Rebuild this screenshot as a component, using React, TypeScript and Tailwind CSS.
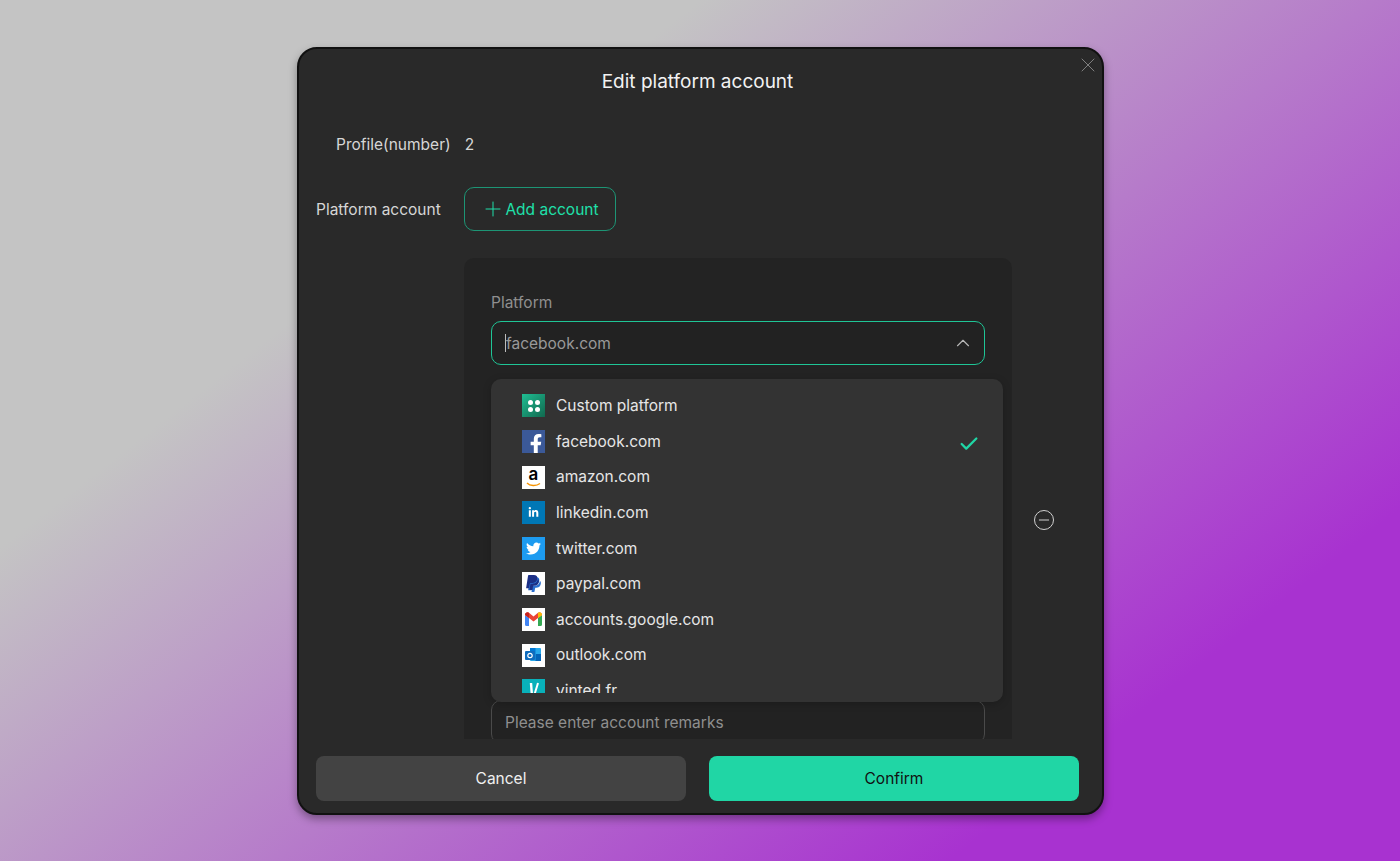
import { ReactNode } from "react";
import { FaFacebookF, FaLinkedinIn, FaPaypal, FaTwitter } from "react-icons/fa";
import { LuCheck, LuChevronUp, LuMinus, LuPlus, LuX } from "react-icons/lu";

const platforms: { name: string; icon: ReactNode; selected?: boolean }[] = [
  {
    name: "Custom platform",
    icon: (
      <div className="flex h-[23px] w-[23px] items-center justify-center bg-gradient-to-br from-[#1fbf94] to-[#11694f]">
        <div className="grid grid-cols-2 gap-[2px]">
          <span className="h-[5px] w-[5px] rounded-full bg-white" />
          <span className="h-[5px] w-[5px] rounded-full bg-white" />
          <span className="h-[5px] w-[5px] rounded-full bg-white" />
          <span className="h-[5px] w-[5px] rounded-full bg-white" />
        </div>
      </div>
    ),
  },
  {
    name: "facebook.com",
    selected: true,
    icon: (
      <div className="flex h-[23px] w-[23px] items-end justify-center overflow-hidden bg-[#3b5998] pl-[5px]">
        <FaFacebookF className="h-[20px] w-[20px] shrink-0 translate-y-[1px] text-white" />
      </div>
    ),
  },
  {
    name: "amazon.com",
    icon: (
      <div className="flex h-[23px] w-[23px] flex-col items-center bg-white">
        <span className="h-[16px] text-[17px] font-semibold leading-[16px] text-black">a</span>
        <svg width="15" height="5" viewBox="0 0 15 5" fill="none">
          <path d="M1 1C4 4 10 4.500 14 1.500" stroke="#f79400" strokeWidth="1.400" />
        </svg>
      </div>
    ),
  },
  {
    name: "linkedin.com",
    icon: (
      <div className="flex h-[23px] w-[23px] items-center justify-center bg-[#0077b5]">
        <FaLinkedinIn className="h-[11px] w-[11px] text-white" />
      </div>
    ),
  },
  {
    name: "twitter.com",
    icon: (
      <div className="flex h-[23px] w-[23px] items-center justify-center bg-[#1d9bf0]">
        <FaTwitter className="h-[15px] w-[15px] text-white" />
      </div>
    ),
  },
  {
    name: "paypal.com",
    icon: (
      <div className="relative flex h-[23px] w-[23px] items-center justify-center bg-white">
        <FaPaypal className="h-[17px] w-[17px] translate-x-[1px] translate-y-[1px] text-[#2a6fd0]" />
        <FaPaypal className="absolute left-[2px] top-[2px] h-[17px] w-[17px] text-[#1c2f86]" />
      </div>
    ),
  },
  {
    name: "accounts.google.com",
    icon: (
      <div className="flex h-[23px] w-[23px] items-center justify-center bg-white">
        <svg width="17" height="14" viewBox="0 0 17 14" fill="none">
          <path d="M0 3v9.500A1.500 1.500 0 0 0 1.500 14H4V6z" fill="#4285f4" />
          <path d="M13 6v8h2.500a1.500 1.500 0 0 0 1.500-1.500V3z" fill="#34a853" />
          <path d="M0 3c0-2.500 2.600-3.500 4-2.200L8.500 4.500 13 .8C14.400-.5 17 .5 17 3l-4 3-4.500 3.400L4 6z" fill="#ea4335" />
          <path d="M13 .8 13 6l4-3c0-2.500-2.600-3.500-4-2.200z" fill="#fbbc04" />
          <path d="M0 3c0-2.500 2.600-3.500 4-2.200V6z" fill="#c5221f" />
        </svg>
      </div>
    ),
  },
  {
    name: "outlook.com",
    icon: (
      <div className="flex h-[23px] w-[23px] items-center justify-center bg-white">
        <svg width="17" height="16" viewBox="0 0 17 16" fill="none">
          <rect x="5" y="1" width="11" height="13" rx="1" fill="#28a8ea" />
          <rect x="5" y="1" width="5.500" height="6" fill="#0078d4" />
          <rect x="10.500" y="7" width="5.500" height="7" fill="#0364b8" />
          <rect x="0" y="4" width="10" height="9" rx="1" fill="#0f6cbd" />
          <circle cx="5" cy="8.500" r="2.200" stroke="white" strokeWidth="1.200" />
        </svg>
      </div>
    ),
  },
  {
    name: "vinted.fr",
    icon: (
      <div className="flex h-[23px] w-[23px] items-center justify-center bg-[#09b1ba]">
        <svg width="12" height="17" viewBox="0 0 12 17" fill="none">
          <path d="M3 1 4 14" stroke="white" strokeWidth="2.400" />
          <path d="M10 1 6 14" stroke="white" strokeWidth="2" />
        </svg>
      </div>
    ),
  },
];

export default function App() {
  return (
    <div className="flex h-[861px] items-center justify-center overflow-hidden bg-[linear-gradient(142deg,#c4c4c4_28%,#a832d0_82%)] font-['Inter','Liberation_Sans',sans-serif]">
      <div className="relative ml-[1px] flex h-[768px] w-[807px] flex-col rounded-[20px] border-2 border-[#111111] bg-[#292929] shadow-[0_4px_8px_rgba(0,0,0,0.35)]">
        <button type="button" className="absolute right-[2px] top-[4px] text-[#808080]">
          <LuX className="h-[24px] w-[24px]" strokeWidth={1} />
        </button>

        <h2 className="pr-[6px] pt-[19px] text-center text-[19px] font-normal leading-[28px] text-[#f2f2f2]">
          Edit platform account
        </h2>

        <div className="mt-[15px] flex h-[628px] flex-col overflow-hidden pl-[17px] pt-[10px]">
          <div className="flex h-[44px] shrink-0 items-center pl-[20px] pt-[4px] text-[15.5px] text-[#d6d6d6]">
            <span>Profile(number)</span>
            <span className="ml-[14px]">2</span>
          </div>

          <div className="mt-[22px] flex shrink-0 items-center">
            <span className="w-[148px] pt-[2px] text-[15.5px] text-[#d6d6d6]">Platform account</span>
            <button
              type="button"
              className="flex h-[44px] w-[152px] items-center justify-center rounded-[10px] border border-[#1d9575] text-[15.5px] text-[#1fe0aa]"
            >
              <LuPlus className="h-[24px] w-[24px]" strokeWidth={1} />
              <span className="pt-[2px]">Add account</span>
            </button>
          </div>

          <div className="mt-[27px] flex shrink-0">
            <div className="relative ml-[148px] h-[600px] w-[548px] shrink-0 rounded-[10px] bg-[#232323] px-[27px] pt-[34px]">
              <div className="text-[15.5px] leading-[22px] text-[#8f8f8f]">Platform</div>
              <div className="mt-[7px] flex h-[44px] w-[494px] items-center justify-between rounded-[10px] border border-[#1fc596] bg-[#222222] pl-[13px] pr-[10px]">
                <div className="flex items-center">
                  <span className="h-[18px] w-px bg-[#bdbdbd]" />
                  <span className="pt-[2px] text-[15.5px] text-[#999999]">facebook.com</span>
                </div>
                <LuChevronUp className="h-[22px] w-[22px] text-[#b8b8b8]" strokeWidth={1.25} />
              </div>

              <div className="mt-[335px] flex h-[44px] w-[494px] items-center rounded-[10px] border border-[#4a4a4a] bg-[#222222] pl-[13px] pt-[2px] text-[15.5px] text-[#8f8f8f]">
                Please enter account remarks
              </div>

              <div className="absolute left-[27px] top-[121px] h-[323px] w-[512px] rounded-[10px] bg-[#333333] pt-[9.6px] shadow-[0_2px_8px_rgba(0,0,0,0.2)]">
                <div className="h-[305px] overflow-hidden">
                  {platforms.map((p) => (
                    <div key={p.name} className="flex h-[35.6px] items-center pl-[31px] pr-[23px]">
                      <div className="w-[23px] shrink-0">{p.icon}</div>
                      <span className="ml-[11px] flex-1 text-[15.5px] text-[#e6e6e6]">{p.name}</span>
                      {p.selected && <LuCheck className="mt-[5px] h-[22px] w-[22px] text-[#20d6a5]" strokeWidth={2.5} />}
                    </div>
                  ))}
                </div>
              </div>
            </div>

            <div className="ml-[22px] mt-[252px] flex h-[20px] w-[20px] shrink-0 items-center justify-center rounded-full border-[1.25px] border-[#d0d0d0] text-[#d0d0d0]">
              <LuMinus className="h-[16px] w-[16px]" strokeWidth={1.5} />
            </div>
          </div>
        </div>

        <div className="mt-[17px] flex gap-[23px] pl-[17px]">
          <button type="button" className="h-[45px] w-[370px] rounded-[8px] bg-[#434343] pt-[1px] text-[15.5px] text-[#f0f0f0]">
            Cancel
          </button>
          <button type="button" className="h-[45px] w-[370px] rounded-[8px] bg-[#20d6a5] pt-[1px] text-[15.5px] text-[#111111]">
            Confirm
          </button>
        </div>
      </div>
    </div>
  );
}
